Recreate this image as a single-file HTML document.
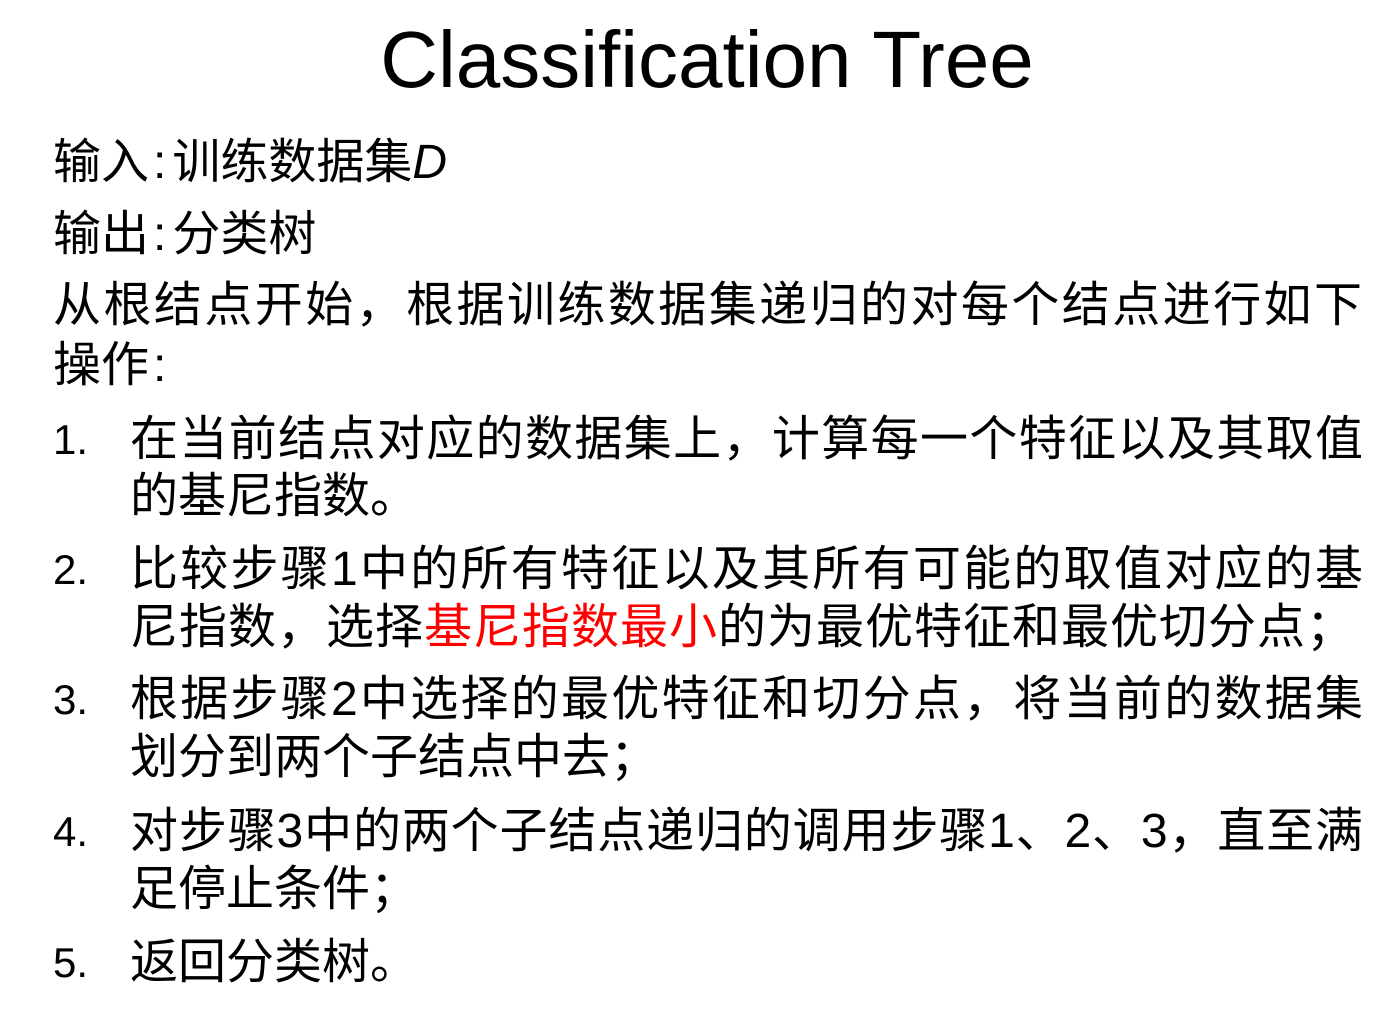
<!DOCTYPE html>
<html><head><meta charset="utf-8"><style>
html,body{margin:0;padding:0;background:#fff;}
body{width:1398px;height:1016px;position:relative;overflow:hidden;color:#000;
font-family:"Liberation Sans","Noto Sans CJK SC",sans-serif;}
.t{position:absolute;left:8px;width:1398px;top:14px;text-align:center;font-size:80px;line-height:92px;}
.l{position:absolute;font-size:48px;line-height:60px;white-space:nowrap;}
.j{text-align:justify;text-align-last:justify;white-space:normal;}
.n{position:absolute;left:53px;font-size:42px;line-height:60px;}
.r{color:#ff0000;}
.c{display:inline-block;margin:0 6px 0 4px;}
</style></head><body>
<div class="t">Classification Tree</div>
<div class="l" style="left:53px;top:133px">输入<span class="c">:</span>训练数据集<i>D</i></div>
<div class="l" style="left:53px;top:205px">输出<span class="c">:</span>分类树</div>
<div class="l j" style="left:53px;top:276px;width:1309px">从根结点开始，根据训练数据集递归的对每个结点进行如下</div>
<div class="l" style="left:53px;top:336px">操作<span class="c">:</span></div>

<div class="n" style="top:410px">1.</div>
<div class="l j" style="left:130px;top:410px;width:1233px">在当前结点对应的数据集上，计算每一个特征以及其取值</div>
<div class="l" style="left:130px;top:467px">的基尼指数。</div>

<div class="n" style="top:540px">2.</div>
<div class="l j" style="left:130px;top:540px;width:1233px">比较步骤1中的所有特征以及其所有可能的取值对应的基</div>
<div class="l" style="left:130px;top:598px;letter-spacing:1px">尼指数，选择<span class="r">基尼指数最小</span>的为最优特征和最优切分点；</div>

<div class="n" style="top:670px">3.</div>
<div class="l j" style="left:130px;top:670px;width:1233px">根据步骤2中选择的最优特征和切分点，将当前的数据集</div>
<div class="l" style="left:130px;top:728px">划分到两个子结点中去；</div>

<div class="n" style="top:802px">4.</div>
<div class="l j" style="left:130px;top:802px;width:1233px">对步骤3中的两个子结点递归的调用步骤1、2、3，直至满</div>
<div class="l" style="left:130px;top:860px">足停止条件；</div>

<div class="n" style="top:933px">5.</div>
<div class="l" style="left:130px;top:933px">返回分类树。</div>
</body></html>
